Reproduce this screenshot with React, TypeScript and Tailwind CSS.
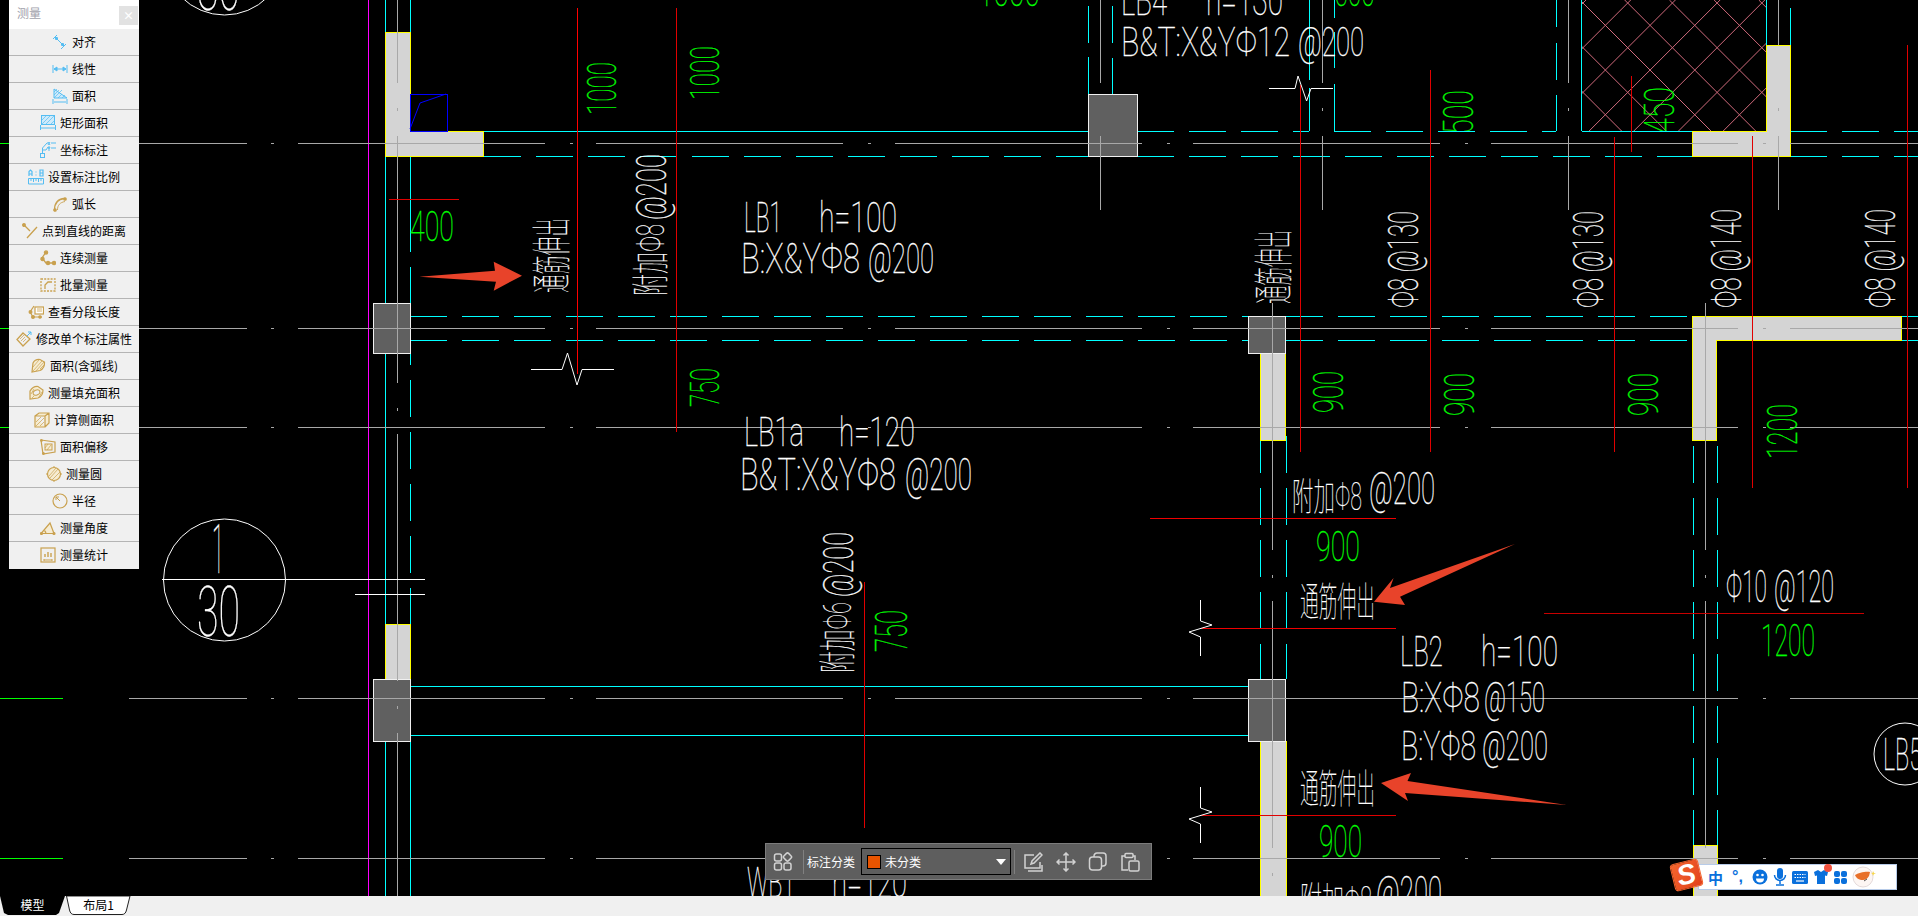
import React from "react";

const CJK = '"Noto Sans CJK SC", "Noto Sans", sans-serif';
const CAD = 'Roboto, "Noto Sans CJK SC", sans-serif';
const CY = "#00ffff";
const GR = "#00ff00";
const GY = "#a8a8a8";
const RED = "#e00000";

function T({ b, s, c = "#fff", r = false, f = 0 }: { b: [number, number, number, number]; s: string; c?: string; r?: boolean; f?: number }) {
  const [x0, y0, x1, y1] = b;
  const cap = r ? x1 - x0 : y1 - y0;
  const len = r ? y1 - y0 : x1 - x0;
  const fs = f || cap / 0.71;
  return (
    <text
      transform={r ? `translate(${x1} ${y1}) rotate(-90)` : `translate(${x0} ${y1})`}
      fontSize={fs}
      fontFamily={CAD}
      fontWeight={100}
      fill={c}
      stroke={c}
      strokeWidth={f ? 0.12 : 0.3}
      textLength={len}
      lengthAdjust="spacingAndGlyphs"
      xmlSpace="preserve"
    >
      {s}
    </text>
  );
}

function H({ a, y, b, c, d = "", o = 0, w = 1 }: { a: number; y: number; b: number; c: string; d?: string; o?: number; w?: number }) {
  return <line x1={a} y1={y + 0.5} x2={b} y2={y + 0.5} stroke={c} strokeWidth={w} strokeDasharray={d || undefined} strokeDashoffset={o} shapeRendering="crispEdges" />;
}
function V({ x, a, b, c, d = "", w = 1 }: { x: number; a: number; b: number; c: string; d?: string; w?: number }) {
  return <line x1={x + 0.5} y1={a} x2={x + 0.5} y2={b} stroke={c} strokeWidth={w} strokeDasharray={d || undefined} shapeRendering="crispEdges" />;
}
const CDASH = "37 15";
const GDASH = "247 25 3 23.3";

function Wall({ p }: { p: string }) {
  return <polygon points={p} fill="#d4d4d4" stroke="#ffff00" strokeWidth={1} shapeRendering="crispEdges" />;
}
function Col({ x, y, w, h }: { x: number; y: number; w: number; h: number }) {
  return <rect x={x + 0.5} y={y + 0.5} width={w} height={h} fill="#606060" stroke="#f0f0f0" strokeWidth={1} shapeRendering="crispEdges" />;
}

const hatchA = Array.from({ length: 9 }, (_, i) => 1586 + (i - 1) * 44.7);
const hatchB = Array.from({ length: 8 }, (_, i) => 1580 + (i - 3) * 44.7);

function Drawing() {
  return (
    <svg width={1918} height={896} viewBox="0 0 1918 896" className="block">
      <defs>
        <clipPath id="hatch"><rect x={1582} y={0} width={184} height={131} /></clipPath>
        <clipPath id="c131"><rect x={1400} y={0} width={300} height={131} /></clipPath>
      </defs>
      <g clipPath="url(#hatch)" stroke="#d06a7c" strokeWidth={1}>
        {hatchA.map((k) => <line key={k} x1={k} y1={0} x2={k - 140} y2={140} />)}
        {hatchB.map((k) => <line key={k} x1={k} y1={0} x2={k + 140} y2={140} />)}
      </g>

      <V x={368} a={0} b={896} c="#ff00ff" />
      <V x={385} a={0} b={896} c={CY} />
      <V x={410} a={0} b={252} c={CY} />
      <V x={410} a={267} b={303} c={CY} />
      <V x={410} a={328} b={624} c={CY} d={CDASH} />
      <V x={410} a={741} b={896} c={CY} />
      <V x={1088} a={6} b={43} c={CY} /><V x={1088} a={57} b={94} c={CY} />
      <V x={1112} a={6} b={43} c={CY} /><V x={1112} a={58} b={94} c={CY} />
      <V x={1309} a={0} b={80} c={CY} /><V x={1309} a={88} b={131} c={CY} />
      <V x={1334} a={0} b={18} c={CY} /><V x={1334} a={32} b={68} c={CY} /><V x={1334} a={84} b={131} c={CY} />
      <V x={1556} a={0} b={27} c={CY} /><V x={1556} a={43} b={80} c={CY} /><V x={1556} a={95} b={131} c={CY} />
      <V x={1581} a={0} b={131} c={CY} />
      <V x={1766} a={0} b={45} c={CY} />
      <V x={1790} a={8} b={45} c={CY} />
      <V x={1260} a={436} b={679} c={CY} d={CDASH} />
      <V x={1286} a={436} b={679} c={CY} d={CDASH} />
      <V x={1693} a={446} b={845} c={CY} d={CDASH} />
      <V x={1717} a={446} b={845} c={CY} d={CDASH} />

      <H a={484} y={131} b={1088} c={CY} />
      <H a={1137} y={131} b={1309} c={CY} d={CDASH} />
      <H a={1334} y={131} b={1556} c={CY} d={CDASH} />
      <H a={1582} y={131} b={1692} c={CY} />
      <H a={1790} y={131} b={1918} c={CY} d={CDASH} />
      <H a={484} y={156} b={1088} c={CY} d={CDASH} />
      <H a={1137} y={156} b={1692} c={CY} d={CDASH} />
      <H a={1790} y={156} b={1918} c={CY} d={CDASH} />
      <H a={410} y={316} b={1248} c={CY} d={CDASH} />
      <H a={410} y={340} b={1248} c={CY} d={CDASH} />
      <H a={1286} y={316} b={1692} c={CY} d={CDASH} />
      <H a={1286} y={340} b={1692} c={CY} d={CDASH} />
      <H a={1901} y={316} b={1918} c={CY} />
      <H a={1901} y={340} b={1918} c={CY} />
      <H a={410} y={686} b={1248} c={CY} />
      <H a={410} y={735} b={1248} c={CY} />

      <Wall p="385.5,32.5 410.5,32.5 410.5,131.5 483.5,131.5 483.5,156.5 385.5,156.5" />
      <Wall p="1766.5,45.5 1790.5,45.5 1790.5,156.5 1692.5,156.5 1692.5,131.5 1766.5,131.5" />
      <Wall p="1692.5,316.5 1901.5,316.5 1901.5,340.5 1716.5,340.5 1716.5,440.5 1692.5,440.5" />
      <Wall p="1260.5,353.5 1285.5,353.5 1285.5,440.5 1260.5,440.5" />
      <Wall p="385.5,624.5 410.5,624.5 410.5,679.5 385.5,679.5" />
      <Wall p="1260.5,741.5 1286.5,741.5 1286.5,897 1260.5,897" />
      <Wall p="1693.5,845.5 1717.5,845.5 1717.5,897 1693.5,897" />
      <Col x={373} y={303} w={37} h={50} />
      <Col x={1088} y={94} w={49} h={62} />
      <Col x={1248} y={316} w={37} h={37} />
      <Col x={373} y={679} w={37} h={62} />
      <Col x={1248} y={679} w={37} h={62} />

      {[143, 328, 427, 698, 858].map((y) => (
        <g key={y}>
          <H a={0} y={y} b={63} c={GR} />
          <H a={129} y={y} b={247} c={GY} />
          <H a={271} y={y} b={274} c={GY} />
          <H a={298} y={y} b={1918} c={GY} d={GDASH} />
        </g>
      ))}
      <V x={397} a={0} b={83} c={GY} /><V x={397} a={108} b={111} c={GY} />
      <V x={397} a={136} b={896} c={GY} d={GDASH} />
      {[1100, 1322, 1568, 1778].map((x) => (
        <g key={x}>
          <V x={x} a={0} b={x === 1778 ? 45 : 83} c={GY} />
          {x !== 1100 && <V x={x} a={108} b={111} c={GY} />}
          <V x={x} a={136} b={210} c={GY} />
        </g>
      ))}
      <V x={1272} a={303} b={896} c={GY} d={GDASH} />
      <V x={1705} a={303} b={896} c={GY} d={GDASH} />

      <rect x={410} y={94.5} width={37} height={37} fill="none" stroke="#0000ff" shapeRendering="crispEdges" />
      <polyline points="410,129 420,103 446,94" fill="none" stroke="#0000ff" />

      <V x={577} a={8} b={374} c="#ff0000" />
      <V x={676} a={8} b={432} c={RED} />
      <V x={1300} a={85} b={452} c={RED} />
      <V x={1430} a={70} b={452} c={RED} />
      <V x={1614} a={137} b={452} c={RED} />
      <V x={1631} a={76} b={152} c={RED} />
      <V x={1752} a={136} b={488} c={RED} />
      <V x={1907} a={45} b={488} c={RED} />
      <V x={864} a={582} b={828} c={RED} />
      <H a={389} y={199} b={459} c={RED} />
      <H a={1150} y={518} b={1396} c="#f00000" />
      <H a={1201} y={628} b={1396} c="#f00000" />
      <H a={1201} y={815} b={1396} c={RED} />
      <H a={1544} y={613} b={1864} c="#c80000" />

      <g fill="none" stroke="#fff" strokeWidth={1}>
        <polyline points="531,369.5 562,369.5 567.5,353 577,385 582,369.5 614,369.5" />
        <polyline points="1269,88.5 1295,88.5 1298,76 1306.6,101 1311,88.5 1333,88.5" />
        <polyline points="1200.5,600 1200.5,621 1212,625 1189,632 1200.5,637 1200.5,656" />
        <polyline points="1200.5,787 1200.5,808 1212,812 1189,819 1200.5,824 1200.5,843" />
        <circle cx={224.5} cy={580} r={61} />
        <circle cx={224.5} cy={-46} r={61} />
        <circle cx={1905} cy={754} r={31} />
      </g>
      <H a={162} y={579} b={425} c="#fff" />
      <H a={355} y={594} b={425} c="#fff" />

      <T b={[212, 524, 224, 573]} s="1" />
      <T b={[197, 586, 240, 636]} s="30" />
      <T b={[197, -40, 240, 10]} s="30" />
      <T b={[1883, 738, 1922, 770]} s="LB5" />

      <T b={[744, 202, 782, 232]} s="LB1" />
      <T b={[819, 202, 897, 232]} s="h=100" />
      <T b={[741, 243, 860, 273]} s="B:X&YΦ8" />
      <T b={[868, 243, 934, 273]} s="@200" />
      <T b={[744, 417, 804, 446]} s="LB1a" />
      <T b={[839, 417, 915, 446]} s="h=120" />
      <T b={[740, 459, 896, 490]} s="B&T:X&YΦ8" />
      <T b={[905, 459, 972, 490]} s="@200" />
      <T b={[1121, -15, 1167, 15]} s="LB4" />
      <T b={[1206, -15, 1283, 15]} s="h=130" />
      <T b={[1121, 27, 1290, 56]} s="B&T:X&YΦ12" />
      <T b={[1298, 27, 1364, 56]} s="@200" />
      <T b={[1400, 636, 1443, 666]} s="LB2" />
      <T b={[1481, 636, 1558, 666]} s="h=100" />
      <T b={[1401, 682, 1480, 712]} s="B:XΦ8" />
      <T b={[1484, 682, 1545, 712]} s="@150" />
      <T b={[1401, 731, 1476, 760]} s="B:YΦ8" />
      <T b={[1482, 731, 1548, 760]} s="@200" />
      <T b={[1726, 571, 1767, 602]} s="Φ10" />
      <T b={[1774, 571, 1834, 602]} s="@120" />
      <T b={[747, 867, 795, 897]} s="WB1" />
      <T b={[832, 867, 907, 897]} s="h=120" />
      <T b={[1292, 473, 1362, 510]} s="附加Φ8" f={38} />
      <T b={[1369, 473, 1435, 504]} s="@200" />
      <T b={[1300, 877, 1372, 914]} s="附加Φ8" f={38} />
      <T b={[1376, 877, 1442, 908]} s="@200" />
      <T b={[1300, 580, 1375, 616]} s="通筋伸出" f={40} />
      <T b={[1300, 767, 1375, 803]} s="通筋伸出" f={40} />

      <T r b={[531, 218, 566, 293]} s="通筋伸出" f={40} />
      <T r b={[1253, 230, 1288, 304]} s="通筋伸出" f={40} />
      <T r b={[628, 224, 664, 296]} s="附加Φ8" f={38} />
      <T r b={[636, 154, 666, 220]} s="@200" />
      <T r b={[815, 602, 851, 673]} s="附加Φ6" f={38} />
      <T r b={[823, 532, 853, 597]} s="@200" />
      <T r b={[1388, 211, 1418, 308]} s="Φ8 @130" />
      <T r b={[1573, 211, 1603, 308]} s="Φ8 @130" />
      <T r b={[1711, 209, 1741, 308]} s="Φ8 @140" />
      <T r b={[1865, 209, 1895, 308]} s="Φ8 @140" />

      <T r c={GR} b={[587, 62, 616, 115]} s="1000" />
      <T r c={GR} b={[690, 46, 719, 100]} s="1000" />
      <T r c={GR} b={[690, 368, 719, 407]} s="750" />
      <T r c={GR} b={[876, 610, 907, 652]} s="750" />
      <T r c={GR} b={[1313, 371, 1343, 413]} s="900" />
      <T r c={GR} b={[1444, 373, 1474, 416]} s="900" />
      <T r c={GR} b={[1628, 373, 1658, 416]} s="900" />
      <T r c={GR} b={[1767, 404, 1797, 459]} s="1200" />
      <g clipPath="url(#c131)">
        <T r c={GR} b={[1443, 90, 1473, 134]} s="500" />
        <T r c={GR} b={[1644, 87, 1674, 134]} s="450" />
      </g>
      <T c={GR} b={[410, 211, 454, 241]} s="400" />
      <T c={GR} b={[978, -24, 1040, 6]} s="1000" />
      <T c={GR} b={[1334, -24, 1375, 6]} s="500" />
      <T c={GR} b={[1316, 531, 1360, 561]} s="900" />
      <T c={GR} b={[1319, 826, 1362, 857]} s="900" />
      <T c={GR} b={[1761, 625, 1815, 656]} s="1200" />

      <polygon points="419.4,276.7 495,270.7 493.7,261.7 522,275.7 493.7,290.7 496,281.7" fill="#e8432a" />
      <polygon points="1515,544 1390,588 1393.6,578 1374,601.7 1405,605 1400,596.7" fill="#e8432a" />
      <polygon points="1566.7,805 1407.5,781 1411,773 1381,783 1408,801 1405,793" fill="#e8432a" />
    </svg>
  );
}

const BL = "#55bdf2";
const GD = "#c9a14f";

function Ic({ children }: { children: React.ReactNode }) {
  return <svg width={16} height={16} viewBox="0 0 16 16" fill="none" strokeWidth={1} className="shrink-0">{children}</svg>;
}
const Hatch = ({ d, c }: { d: string; c: string }) => <path d={d} stroke={c} strokeWidth={0.7} />;

const rows: [string, React.ReactNode][] = [
  ["对齐", <Ic><g stroke={BL}><path d="M1 5 5 1M3 3l9 9M9 15l5-5" /><path d="M3 3l3 1-2 2zM12 12l-3-1 2-2z" fill={BL} /></g></Ic>],
  ["线性", <Ic><g stroke={BL}><path d="M1 4v8M15 4v8M2 8h12" /><path d="M2 8l3-2v4zM14 8l-3-2v4z" fill={BL} /></g></Ic>],
  ["面积", <Ic><g stroke={BL}><path d="M2 1v9h13z" fill="#cfeafa" /><Hatch c={BL} d="M2 4l3-3M2 7l5-5M2 10l8-8M6 10l4-4M10 10l3-3" /><path d="M1 11v5M15 11v5M2 14h12" /></g></Ic>],
  ["矩形面积", <Ic><g stroke={BL}><rect x={1.5} y={0.5} width={13} height={9} fill="#cfeafa" /><Hatch c={BL} d="M2 5l4-4M2 9l8-8M6 9l8-8M11 9l3-3" /><path d="M0.5 10v5M15.5 10v5M1 13h14" /></g></Ic>],
  ["坐标标注", <Ic><g stroke={BL}><rect x={0.5} y={11.5} width={4} height={4} /><path d="M2.5 11V6L7 1h1M2.5 8H6l2-3h2M11 1h5M11 6h5" /><path d="M8 0l2 3M10 0 8 3M8 5l1 2v2M10 5 9 7" /></g></Ic>],
  ["设置标注比例", <Ic><g stroke={BL}><path d="M0.5 15V9.5h15V15zM3 10v2M5.5 10v3M8 10v2M10.5 10v3M13 10v2" /><path d="M1 7V2.5L2.5 1 4 2.5V7M1 5h3M12 1h3v6h-3zM12 4h3" strokeWidth={1.2} /><path d="M7.5 3h1M7.5 6h1" /></g></Ic>],
  ["弧长", <Ic><g stroke={GD} strokeWidth={1.3}><path d="M2.5 14C2.5 7 6 3 12.5 2.5" /><path d="M5.5 14C5.5 9 8 6.5 13 5.5" strokeWidth={0.9} /><circle cx={3} cy={14} r={1.2} fill={GD} /><circle cx={13} cy={3} r={1.2} fill={GD} /></g></Ic>],
  ["点到直线的距离", <Ic><g stroke={GD} strokeWidth={1.3}><path d="M15 4 5 15M1 1l7 7" /><circle cx={2} cy={2} r={1.3} fill={GD} /></g></Ic>],
  ["连续测量", <Ic><g stroke={GD} strokeWidth={1.3}><path d="M6 2 2 8l4 5h8" /><circle cx={6} cy={2.5} r={1.6} fill={GD} /><circle cx={2.5} cy={9} r={1.6} fill={GD} /><circle cx={8} cy={13} r={1.6} fill={GD} /><circle cx={14} cy={13} r={1.6} fill={GD} /></g></Ic>],
  ["批量测量", <Ic><g stroke={GD} strokeWidth={1.3}><rect x={1} y={2} width={14} height={12} strokeDasharray="2 1.2" /><path d="M5 12V8l3-3h4" /></g></Ic>],
  ["查看分段长度", <Ic><g stroke={GD} strokeWidth={1.2}><rect x={7} y={3} width={8.5} height={7} fill="#fff" /><path d="M9 5h5M9 7h5" strokeWidth={0.8} /><path d="M6 2 2 8l3 5h9" /><circle cx={2.5} cy={8} r={1.4} fill={GD} /><circle cx={5} cy={13} r={1.4} fill={GD} /><circle cx={12} cy={13} r={1.2} fill={GD} /></g></Ic>],
  ["修改单个标注属性", <Ic><g stroke={GD}><path d="M7 2 14 8 7 15 1 8.5z" strokeWidth={1.3} /><Hatch c={GD} d="M4 8l4-4M5 10l4-4M7 11l3-3" /><path d="M11 5l4-4M15 1h-3M15 1v3" stroke={BL} /></g></Ic>],
  ["面积(含弧线)", <Ic><g stroke={GD}><path d="M2 14 3 5Q5 1 10 1.5L14.5 4Q15 10 10 12.5z" fill="#f6ecd2" strokeWidth={1.2} /><Hatch c={GD} d="M3 9l6-7M3 13 12 3M6 13l8-9M10 11l4-4" /></g></Ic>],
  ["测量填充面积", <Ic><g stroke={GD}><path d="M2 14 2 6Q5 1 10 1.5L15 5Q15 11 10 13z" fill="#f6ecd2" strokeWidth={1.2} /><ellipse cx={8.5} cy={7.5} rx={3.5} ry={2.5} transform="rotate(-25 8.5 7.5)" fill="#f0f0f0" strokeWidth={1} /><Hatch c={GD} d="M3 9l3-5M4 13l2-2M11 12l3-5" /></g></Ic>],
  ["计算侧面积", <Ic><g stroke={GD}><path d="M1 4v11h10V4zM1 4l4-3h10v10l-4 4M11 4l4-3" fill="#f6ecd2" strokeWidth={1.2} /><Hatch c={GD} d="M2 10l5-5M2 14l8-8M6 14l4-4" /></g></Ic>],
  ["面积偏移", <Ic><g stroke={GD}><path d="M1 1l14 2v10L3 15z" strokeWidth={1.2} /><rect x={5} y={5} width={7} height={6} fill="#f6ecd2" /><Hatch c={GD} d="M5 9l3-4M7 11l4-5" /><circle cx={1.5} cy={1.5} r={1} fill={GD} /><circle cx={3.5} cy={14.5} r={1} fill={GD} /></g></Ic>],
  ["测量圆", <Ic><g stroke={GD}><circle cx={8} cy={8} r={6.5} fill="#f6ecd2" strokeWidth={1.2} /><Hatch c={GD} d="M3 10l7-8M4 12l8-9M6 14l8-8" /><path d="M8 0v1M8 15v1M0 8h1M15 8h1" /></g></Ic>],
  ["半径", <Ic><g stroke={GD}><circle cx={8} cy={8} r={7} strokeWidth={1.2} /><path d="M8 8 4 4M4 4v3M4 4h3" /></g></Ic>],
  ["测量角度", <Ic><g stroke={GD} strokeWidth={1.2}><path d="M1 13.5h13L10 3z" fill="#f6ecd2" /><path d="M6 14c0-2-1-3-1.5-3.5" /><circle cx={1.5} cy={13.5} r={1} fill={GD} /><circle cx={14} cy={13.5} r={1} fill={GD} /></g></Ic>],
  ["测量统计", <Ic><g stroke={GD}><rect x={1} y={1} width={14} height={14} strokeWidth={1.2} /><path d="M5 10V7M8 10V5M11 10V6" strokeWidth={1.4} /><path d="M4 13h8M4 12v2M12 12v2" /></g></Ic>],
];

function Panel() {
  return (
    <div className="absolute left-[9px] top-0 w-[130px] bg-[#f0f0f0]" style={{ fontFamily: CJK }}>
      <div className="flex h-[29px] items-start justify-between bg-white pl-2 pr-px pt-[6px]">
        <span className="text-[12px] leading-[14px] text-[#a2a2ac]">测量</span>
        <span className="flex h-[19px] w-[19px] items-center justify-center bg-[#e2e2e2] text-[11px] font-bold leading-none text-white">×</span>
      </div>
      {rows.map(([label, icon], i) => (
        <div key={label} className={`flex h-[27px] items-center justify-center gap-[4px] pb-px ${i < rows.length - 1 ? "border-b border-[#b4b4b4]" : ""}`}>
          {icon}
          <span className="whitespace-nowrap text-[12px] leading-none text-black">{label}</span>
        </div>
      ))}
    </div>
  );
}

function Toolbar() {
  const s = "#d2d2d2";
  return (
    <div className="absolute left-[765px] top-[843px] flex h-[37px] w-[387px] items-center border border-[#7c7c7c] bg-[#5e5e5e] text-[12px] text-white" style={{ fontFamily: CJK }}>
      <svg width={20} height={20} viewBox="0 0 20 20" fill="none" stroke={s} strokeWidth={1.5} className="ml-[7px] shrink-0">
        <rect x={1.5} y={2} width={7} height={7} rx={2} />
        <rect x={11.2} y={1.7} width={6.6} height={6.6} rx={1.5} transform="rotate(45 14.5 5)" />
        <rect x={1.5} y={11} width={7} height={7} rx={2} />
        <rect x={11} y={11} width={7} height={7} rx={2} />
      </svg>
      <div className="ml-[10px] h-[24px] w-px shrink-0 bg-[#808080]" />
      <span className="ml-[3px] w-[48px] whitespace-nowrap leading-none">标注分类</span>
      <div className="ml-[6px] flex h-[27px] w-[150px] items-center border border-black pl-[5px]">
        <span className="h-[14px] w-[14px] shrink-0 border border-black bg-[#e85400]" />
        <span className="ml-[4px] flex-1 leading-none">未分类</span>
        <span className="mr-[4px] h-0 w-0 border-x-[5px] border-t-[6px] border-x-transparent border-t-white" />
      </div>
      <div className="ml-[3px] h-[24px] w-px shrink-0 bg-[#808080]" />
      <div className="ml-[8px] flex items-center gap-[13px]">
        <svg width={20} height={20} viewBox="0 0 20 20" fill="none" stroke={s} strokeWidth={1.5}>
          <path d="M11 3H2v13h15v-6M5 19h14V13" />
          <path d="M8 12l1-3 8-8 2 2-8 8z" />
        </svg>
        <svg width={20} height={20} viewBox="0 0 20 20" fill="none" stroke={s} strokeWidth={1.5}>
          <path d="M10 1v18M1 10h18M7.5 3.5 10 1l2.5 2.5M7.5 16.5 10 19l2.5-2.5M3.5 7.5 1 10l2.5 2.5M16.5 7.5 19 10l-2.5 2.5" />
        </svg>
        <svg width={20} height={20} viewBox="0 0 20 20" fill="none" stroke={s} strokeWidth={1.5} className="ml-[-1px]">
          <rect x={1.5} y={5} width={12} height={13} rx={3} />
          <path d="M6 5V4a3 3 0 0 1 3-3h6a3 3 0 0 1 3 3v7a3 3 0 0 1-3 3h-1.5" />
        </svg>
        <svg width={20} height={20} viewBox="0 0 20 20" fill="none" stroke={s} strokeWidth={1.5} className="ml-[-1px]">
          <path d="M8 18H2V4h3M13 4h2v4" />
          <rect x={5} y={1.5} width={8} height={4} rx={1} />
          <rect x={9} y={9} width={10} height={10} rx={1.5} />
        </svg>
      </div>
    </div>
  );
}

function Ime() {
  const b = "#0a70dc";
  return (
    <div className="absolute left-[1671px] top-[860px] h-[31px] w-[227px]">
      <div className="ml-[27px] mt-[4px] flex h-[26px] w-[199px] items-center border border-[#b7cbe8] bg-white">
        <span className="ml-[9px] w-[17px] text-[15px] font-bold leading-none text-[#0a70dc]" style={{ fontFamily: CJK }}>中</span>
        <span className="ml-[7px] w-[16px] text-[16px] font-bold leading-none text-[#0a70dc]" style={{ fontFamily: '"Liberation Sans", sans-serif' }}>°,</span>
        <svg width={16} height={16} viewBox="0 0 16 16" className="ml-[4px]">
          <circle cx={8} cy={8} r={7.5} fill={b} />
          <circle cx={5.5} cy={6} r={1.3} fill="#fff" /><circle cx={10.5} cy={6} r={1.3} fill="#fff" />
          <path d="M4 9.5h8a4 4 0 0 1-8 0z" fill="#fff" />
        </svg>
        <svg width={14} height={18} viewBox="0 0 14 18" className="ml-[5px]">
          <rect x={4} y={0} width={6} height={11} rx={3} fill={b} />
          <path d="M1.5 7a5.500 5.500 0 0 0 11 0M7 13v3M3 17h8" stroke={b} strokeWidth={1.5} fill="none" />
        </svg>
        <svg width={16} height={13} viewBox="0 0 16 13" className="ml-[5px]">
          <rect width={16} height={13} rx={1.5} fill={b} />
          <path d="M2.500 3.500h11M2.500 6.500h11" stroke="#fff" strokeWidth={1.2} strokeDasharray="1.5 1" />
          <path d="M4 10h8" stroke="#fff" strokeWidth={1.2} />
        </svg>
        <span className="relative ml-[5px] block h-[16px] w-[16px]">
          <svg width={16} height={16} viewBox="0 0 16 16"><path d="M5 1 1 3l1 4 2-.5V15h8V6.500l2 .5 1-4-4-2-3 2z" fill={b} /></svg>
          <span className="absolute right-[-3px] top-[-5px] h-[8px] w-[8px] rounded-full bg-[#f0503c]" />
        </span>
        <span className="ml-[5px] grid h-[13px] w-[13px] grid-cols-2 gap-[1px]">
          <i className="rounded-[2px] bg-[#0a70dc]" /><i className="rounded-[2px] bg-[#0a70dc]" /><i className="rounded-[2px] bg-[#0a70dc]" /><i className="rounded-[2px] bg-[#0a70dc]" />
        </span>
        <svg width={24} height={22} viewBox="0 0 24 22" className="ml-[5px]">
          <circle cx={11} cy={11} r={10} fill="#fdf6f3" stroke="#e4dada" />
          <path d="M3 9c3-2 11-4 15-3l-1 4c-2 3-4 4-6 4-4 0-7-2-8-5z" fill="#e8702a" />
          <path d="M12 15l3-2" stroke="#555" strokeWidth={1} />
          <path d="M21 5l1 2 2 .5-2 .5-1 2-.5-2-1.500-.5 1.500-.5z" fill="#f7d64a" />
        </svg>
      </div>
      <div className="absolute left-[2px] top-[2px] flex h-[26px] w-[27px] rotate-[-14deg] items-center justify-center rounded-[3px] bg-gradient-to-br from-[#f4662e] to-[#e2401a] shadow-[0_0_0_1px_#f4662e]">
        <span className="text-[28px] font-bold italic leading-none text-white" style={{ fontFamily: '"Liberation Sans", sans-serif' }}>S</span>
      </div>
    </div>
  );
}

function Tabs() {
  return (
    <div className="flex h-[20px] shrink-0 bg-[#f0f0f0] text-[12px] leading-none" style={{ fontFamily: CJK }}>
      <div className="flex h-[19px] w-[65px] items-center justify-center bg-black pb-[2px] text-white [clip-path:polygon(0_0,100%_0,59px_90%,56px_100%,8px_100%,4px_90%)]">模型</div>
      <div className="relative ml-[1px] flex h-[19px] w-[65px] items-center justify-center pb-[2px] text-black">
        <svg width={65} height={19} viewBox="0 0 65 19" className="absolute left-0 top-0">
          <path d="M0.5 0 3.5 14Q4.5 18.5 8 18.5H56Q59.5 18.5 60.5 14L64 0z" fill="#fff" stroke="#222" />
        </svg>
        <span className="relative">布局1</span>
      </div>
    </div>
  );
}

export default function App() {
  return (
    <div className="flex h-[916px] w-[1918px] flex-col overflow-hidden bg-[#f0f0f0]">
      <div className="relative h-[896px] shrink-0 overflow-hidden bg-black">
        <Drawing />
        <Panel />
        <Toolbar />
        <Ime />
      </div>
      <Tabs />
    </div>
  );
}
